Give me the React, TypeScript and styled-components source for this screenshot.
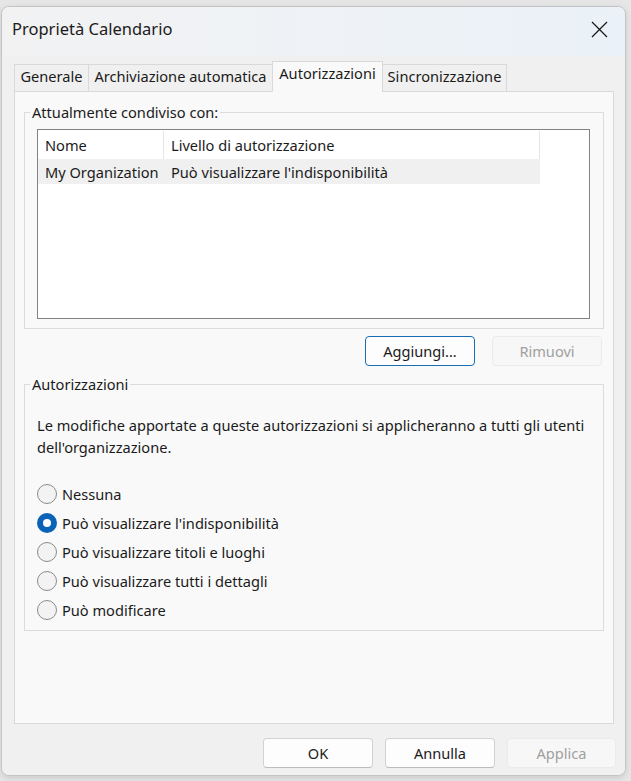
import React from 'react';
import styled, { createGlobalStyle } from 'styled-components';

const GlobalStyle = createGlobalStyle`
  html, body {
    margin: 0;
    padding: 0;
    background: #e6e6e6;
  }
  body {
    font-family: "Noto Sans", "Open Sans", sans-serif;
    color: #1b1b1b;
  }
`;

const Screen = styled.div`
  width: 631px;
  height: 781px;
  box-sizing: border-box;
  padding: 6px 5px 5px 1px;
  background: #e6e6e6;
`;

const Window = styled.div`
  height: 100%;
  box-sizing: border-box;
  display: flex;
  flex-direction: column;
  border: 1px solid #c4c4c4;
  border-radius: 8px;
  background: #f0f0f0;
  overflow: hidden;
  box-shadow: 0 2px 6px rgba(0, 0, 0, 0.12);
`;

const TitleBar = styled.div`
  height: 49px;
  flex: 0 0 auto;
  display: flex;
  align-items: center;
  justify-content: space-between;
  padding: 0 14px 0 10px;
  background: linear-gradient(90deg, #f2f2f3 0%, #eef2f6 60%, #eaf1f8 100%);
`;

const Title = styled.div`
  font-size: 16.5px;
  padding-bottom: 6px;
`;

const CloseButton = styled.div`
  width: 24px;
  height: 24px;
  display: flex;
  align-items: center;
  justify-content: center;
  padding-bottom: 4px;
`;

const Body = styled.div`
  flex: 1;
  display: flex;
  flex-direction: column;
  padding: 0 11px 0 12px;
  background: #f0f0f0;
`;

const TabStrip = styled.div`
  display: flex;
  align-items: flex-end;
  height: 36px;
  position: relative;
  z-index: 1;
  margin-bottom: -1px;
`;

const Tab = styled.div<{ $w: number; $active?: boolean }>`
  width: ${p => p.$w}px;
  box-sizing: border-box;
  height: ${p => (p.$active ? 31 : 28)}px;
  display: flex;
  align-items: center;
  justify-content: center;
  font-size: 14.6px;
  border: 1px solid #d9d9d9;
  border-bottom: ${p => (p.$active ? '1px solid #f9f9f9' : '1px solid #d9d9d9')};
  margin-left: -1px;
  background: ${p => (p.$active ? '#f9f9f9' : '#f0f0f0')};
  padding-bottom: ${p => (p.$active ? 7 : 4)}px;
  &:first-child {
    margin-left: 0;
  }
`;

const Panel = styled.div`
  height: 633px;
  box-sizing: border-box;
  border: 1px solid #d9d9d9;
  background: #f9f9f9;
  padding: 10px 9px 0 9px;
  display: flex;
  flex-direction: column;
`;

const Group = styled.fieldset<{ $h: number }>`
  margin: 0;
  height: ${p => p.$h}px;
  box-sizing: border-box;
  border: 1px solid #dcdcdc;
  border-radius: 0;
  padding: 0 13px 8px 12px;
  display: flex;
  flex-direction: column;
`;

const Legend = styled.legend`
  font-size: 14.6px;
  padding: 0 2px;
  margin-left: -7px;
  line-height: 20px;
`;

const ListBox = styled.div`
  height: 190px;
  box-sizing: border-box;
  flex: 0 0 auto;
  margin-top: 7px;
  border: 1px solid #828282;
  background: #ffffff;
  padding: 1px 49px 0 0;
`;

const ListRow = styled.div<{ $header?: boolean }>`
  display: flex;
  height: ${p => (p.$header ? 28 : 25)}px;
  background: ${p => (p.$header ? '#ffffff' : '#f0f0f0')};
  font-size: 14.6px;
  border-right: ${p => (p.$header ? '1px solid #e5e5e5' : 'none')};
`;

const Cell = styled.div<{ $w?: number; $sep?: boolean }>`
  ${p => (p.$w ? `width: ${p.$w}px;` : 'flex: 1;')}
  box-sizing: border-box;
  display: flex;
  align-items: center;
  padding-left: 7px;
  white-space: nowrap;
  border-right: ${p => (p.$sep ? '1px solid #e5e5e5' : 'none')};
`;

const ButtonRow = styled.div<{ $gap: number; $pad: number; $top: number; $bottom: number }>`
  display: flex;
  justify-content: flex-end;
  gap: ${p => p.$gap}px;
  padding-right: ${p => p.$pad}px;
  margin-top: ${p => p.$top}px;
  margin-bottom: ${p => p.$bottom}px;
`;

const Button = styled.div<{ $default?: boolean; $disabled?: boolean; $w?: number }>`
  width: ${p => p.$w ?? 110}px;
  height: 30px;
  box-sizing: border-box;
  display: flex;
  align-items: center;
  justify-content: center;
  font-size: 14.6px;
  border-radius: 4px;
  background: ${p => (p.$disabled ? '#f7f7f7' : '#fdfdfd')};
  color: ${p => (p.$disabled ? '#a0a0a0' : '#1b1b1b')};
  border: 1px solid
    ${p => (p.$default ? '#1a6cb3' : p.$disabled ? '#ebebeb' : '#d2d2d2')};
  border-bottom-color: ${p => (p.$default ? '#1a6cb3' : p.$disabled ? '#ebebeb' : '#bcbcbc')};
`;

const Description = styled.div`
  font-size: 14.6px;
  line-height: 22px;
  margin-top: 20px;
  padding-right: 4px;
`;

const RadioList = styled.div`
  display: flex;
  flex-direction: column;
  margin-top: 21px;
`;

const RadioRow = styled.div`
  display: flex;
  align-items: center;
  height: 29px;
  gap: 5px;
  font-size: 14.6px;
`;

const RadioCircle = styled.div<{ $checked?: boolean }>`
  width: 20px;
  height: 20px;
  box-sizing: border-box;
  border-radius: 50%;
  border: ${p => (p.$checked ? 'none' : '1px solid #8b8b8b')};
  background: ${p => (p.$checked ? '#0a63b6' : '#f3f3f3')};
  display: flex;
  align-items: center;
  justify-content: center;
  &::after {
    content: '';
    display: ${p => (p.$checked ? 'block' : 'none')};
    width: 8px;
    height: 8px;
    border-radius: 50%;
    background: #ffffff;
  }
`;

const Footer = styled.div`
  flex: 1;
  display: flex;
  justify-content: flex-end;
  align-items: flex-start;
  gap: 12px;
  padding: 14px 0 0 0;
  margin-right: -2px;
`;

const radioOptions = [
  'Nessuna',
  "Può visualizzare l'indisponibilità",
  'Può visualizzare titoli e luoghi',
  'Può visualizzare tutti i dettagli',
  'Può modificare',
];

export default function App() {
  return (
    <>
      <GlobalStyle />
      <Screen>
        <Window>
          <TitleBar>
            <Title>Proprietà Calendario</Title>
            <CloseButton>
              <svg width="17" height="17" viewBox="0 0 17 17">
                <path d="M1 1 L16 16 M16 1 L1 16" stroke="#1b1b1b" strokeWidth="1.3" fill="none" />
              </svg>
            </CloseButton>
          </TitleBar>
          <Body>
            <TabStrip>
              <Tab $w={75}>Generale</Tab>
              <Tab $w={185}>Archiviazione automatica</Tab>
              <Tab $w={111} $active>
                Autorizzazioni
              </Tab>
              <Tab $w={125}>Sincronizzazione</Tab>
            </TabStrip>
            <Panel>
              <Group $h={227}>
                <Legend>Attualmente condiviso con:</Legend>
                <ListBox>
                  <ListRow $header>
                    <Cell $w={126} $sep>Nome</Cell>
                    <Cell>Livello di autorizzazione</Cell>
                  </ListRow>
                  <ListRow>
                    <Cell $w={126}>My Organization</Cell>
                    <Cell>Può visualizzare l'indisponibilità</Cell>
                  </ListRow>
                </ListBox>
              </Group>
              <ButtonRow $gap={17} $pad={2} $top={7} $bottom={8}>
                <Button $default>Aggiungi...</Button>
                <Button $disabled>Rimuovi</Button>
              </ButtonRow>
              <Group $h={257}>
                <Legend>Autorizzazioni</Legend>
                <Description>
                  Le modifiche apportate a queste autorizzazioni si applicheranno a tutti gli utenti
                  dell'organizzazione.
                </Description>
                <RadioList>
                  {radioOptions.map((label, i) => (
                    <RadioRow key={label}>
                      <RadioCircle $checked={i === 1} />
                      {label}
                    </RadioRow>
                  ))}
                </RadioList>
              </Group>
            </Panel>
            <Footer>
              <Button>OK</Button>
              <Button>Annulla</Button>
              <Button $disabled $w={109}>Applica</Button>
            </Footer>
          </Body>
        </Window>
      </Screen>
    </>
  );
}
